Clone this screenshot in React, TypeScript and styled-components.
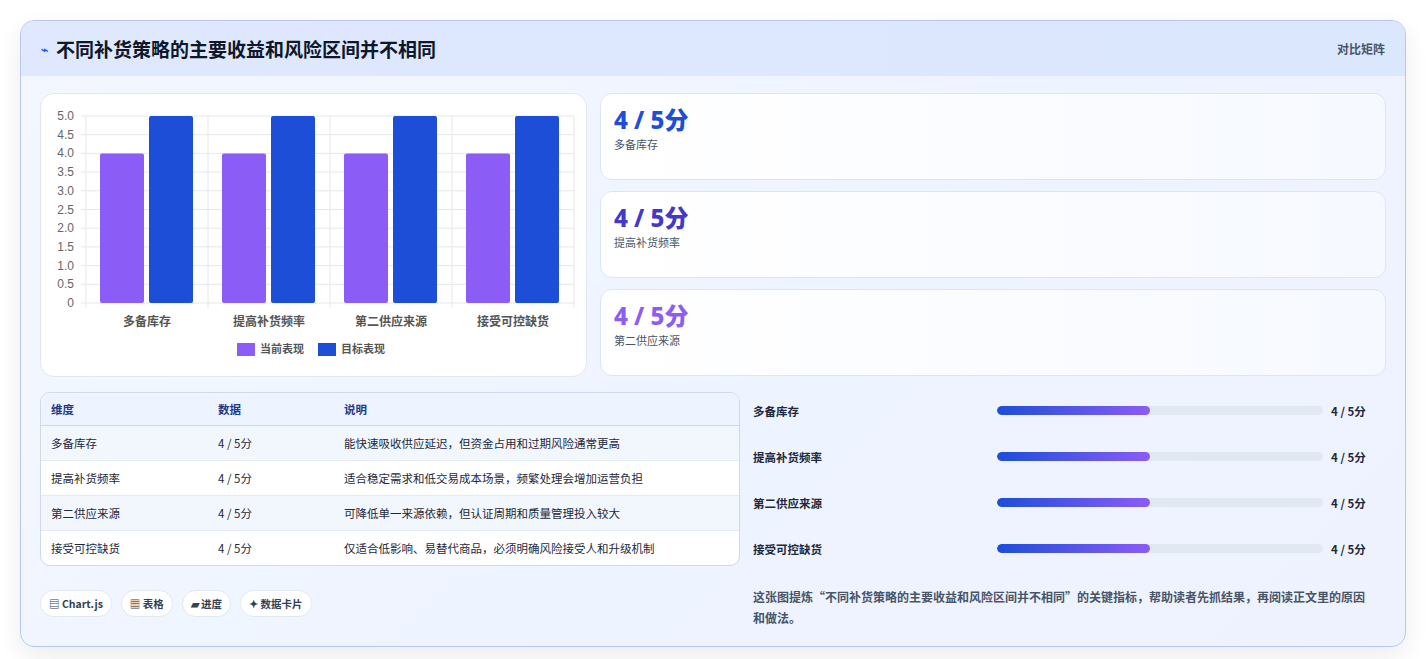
import React from "react";
import styled, { createGlobalStyle } from "styled-components";

const G = createGlobalStyle`
  body{margin:0;background:#fff;font-family:"Noto Sans CJK SC","Noto Sans",sans-serif;}
`;
const Page = styled.div`padding:20px 20px 22px 20px;`;
const Card = styled.div`
  border:1px solid #b9c6ee;border-radius:14px;overflow:hidden;
  background:linear-gradient(135deg,#f3f7ff,#eef4ff 60%,#eef2ff);
  box-shadow:0 10px 24px rgba(15,23,42,0.08);
`;
const Header = styled.div`
  height:55px;display:flex;align-items:center;justify-content:space-between;
  padding:0 20px;background:linear-gradient(90deg,#dfe8fd,#dbe7fd);
`;
const Title = styled.h1`margin:0;font-size:19px;font-weight:700;color:#0f172a;display:flex;align-items:center;gap:8px;`;
const Icon = styled.span`color:#2563eb;font-size:12px;`;
const HeadRight = styled.span`font-size:12px;color:#475569;font-weight:600;`;
const Body = styled.div`padding:17px 19px 18px 19px;display:flex;flex-direction:column;gap:15px;`;
const Row1 = styled.div`display:grid;grid-template-columns:547px 1fr;gap:13px;`;
const Panel = styled.div`background:#fff;border:1px solid #e2e8f0;border-radius:14px;height:284px;box-sizing:border-box;`;
const Stack = styled.div`display:flex;flex-direction:column;gap:11px;`;
const Stat = styled.div`
  height:87px;box-sizing:border-box;border:1px solid #dde5f3;border-radius:12px;
  background:linear-gradient(90deg,#fff,#f6f9ff);padding:10px 13px;
`;
const StatVal = styled.div<{c:string}>`font-size:24px;font-weight:800;color:${p=>p.c};line-height:32px;font-family:"Noto Sans","Noto Sans CJK SC",sans-serif;`;
const StatLbl = styled.div`font-size:11px;color:#475569;margin-top:0px;`;
const Row2 = styled.div`display:grid;grid-template-columns:700px 1fr;gap:13px;`;
const Left = styled.div`display:flex;flex-direction:column;gap:24px;`;
const Table = styled.table`
  width:100%;border-collapse:separate;border-spacing:0;border:1px solid #cfd9ea;border-radius:10px;overflow:hidden;font-size:11.5px;background:#fff;
  th{text-align:left;font-weight:700;color:#1e3a8a;background:#eef4ff;height:32px;padding:0 10px;border-bottom:1px solid #cfd9ea;}
  td{height:34px;padding:0 10px;color:#1e293b;border-bottom:1px solid #e5eaf2;}
  tr:nth-child(odd) td{background:#f2f6fd;}
  tr:last-child td{border-bottom:none;}
`;
const Chips = styled.div`display:flex;gap:9px;`;
const Chip = styled.span`font-size:10.5px;font-weight:700;color:#334155;background:#fff;border:1px solid #e2e8f0;border-radius:14px;padding:5px 8px;`;
const Right = styled.div`display:flex;flex-direction:column;`;
const Bars = styled.div`display:flex;flex-direction:column;gap:27px;padding-top:9px;`;
const BarRow = styled.div`display:grid;grid-template-columns:236px 326px 1fr;gap:8px;align-items:center;height:19px;font-size:11.5px;font-weight:700;color:#1e293b;`;
const Track = styled.div`height:9px;border-radius:5px;background:#e2e8f2;overflow:hidden;`;
const Fill = styled.div`height:100%;border-radius:5px;background:linear-gradient(90deg,#1d4ed8,#8b5cf6);`;
const Note = styled.p`margin:28px 0 0;font-size:12px;line-height:21px;color:#475569;font-weight:700;padding-right:10px;`;

const names=["多备库存","提高补货频率","第二供应来源","接受可控缺货"];
const desc=["能快速吸收供应延迟，但资金占用和过期风险通常更高","适合稳定需求和低交易成本场景，频繁处理会增加运营负担","可降低单一来源依赖，但认证周期和质量管理投入较大","仅适合低影响、易替代商品，必须明确风险接受人和升级机制"];

function Chart(){
  const x0=45,x1=533,y0=22,y1=209;
  const ys=[0,0.5,1,1.5,2,2.5,3,3.5,4,4.5,5];
  const Y=(v:number)=>y1-(v/5)*(y1-y0);
  const gw=(x1-x0)/4;
  return (
    <svg width="546" height="284" style={{display:"block"}}>
      {ys.map(v=><g key={v}><line x1={x0-5} x2={x1} y1={Y(v)} y2={Y(v)} stroke="#e5e7eb"/><text x={x0-12} y={Y(v)+4} fontSize="12" fill="#666" textAnchor="end" fontFamily="Liberation Sans">{v===0?"0":v.toFixed(1)}</text></g>)}
      {[0,1,2,3,4].map(i=><line key={i} x1={x0+i*gw} x2={x0+i*gw} y1={y0} y2={y1+5} stroke="#e5e7eb"/>)}
      {names.map((n,i)=>{const gx=x0+i*gw;return <g key={n}>
        <rect x={gx+14} y={Y(4)} width={44} height={y1-Y(4)} rx="2" fill="#8b5cf6"/>
        <rect x={gx+63} y={Y(5)} width={44} height={y1-Y(5)} rx="2" fill="#1d4ed8"/>
        <text x={gx+gw/2} y={232} fontSize="12" fontWeight="700" fill="#555" textAnchor="middle">{n}</text>
      </g>})}
      <rect x="196" y="249" width="18" height="13" fill="#8b5cf6"/>
      <text x="219" y="259" fontSize="11" fontWeight="700" fill="#555">当前表现</text>
      <rect x="277" y="249" width="18" height="13" fill="#1d4ed8"/>
      <text x="300" y="259" fontSize="11" fontWeight="700" fill="#555">目标表现</text>
    </svg>
  );
}

export default function App(){
  return <Page><G/><Card>
    <Header><Title><Icon>⌁</Icon>不同补货策略的主要收益和风险区间并不相同</Title><HeadRight>对比矩阵</HeadRight></Header>
    <Body>
      <Row1>
        <Panel><Chart/></Panel>
        <Stack>
          {[["#1d4ed8",names[0]],["#4338ca",names[1]],["#8b5cf6",names[2]]].map(([c,n])=>
            <Stat key={n}><StatVal c={c}>4 / 5分</StatVal><StatLbl>{n}</StatLbl></Stat>)}
        </Stack>
      </Row1>
      <Row2>
        <Left>
          <Table><thead><tr><th style={{width:147}}>维度</th><th style={{width:106}}>数据</th><th>说明</th></tr></thead>
            <tbody>{names.map((n,i)=><tr key={n}><td>{n}</td><td>4 / 5分</td><td>{desc[i]}</td></tr>)}</tbody>
          </Table>
          <Chips><Chip>▤ Chart.js</Chip><Chip>▦ 表格</Chip><Chip>▰ 进度</Chip><Chip>✦ 数据卡片</Chip></Chips>
        </Left>
        <Right>
          <Bars>{names.map(n=><BarRow key={n}><span>{n}</span><Track><Fill style={{width:"47%"}}/></Track><span>4 / 5分</span></BarRow>)}</Bars>
          <Note>这张图提炼“不同补货策略的主要收益和风险区间并不相同”的关键指标，帮助读者先抓结果，再阅读正文里的原因和做法。</Note>
        </Right>
      </Row2>
    </Body>
  </Card></Page>;
}
